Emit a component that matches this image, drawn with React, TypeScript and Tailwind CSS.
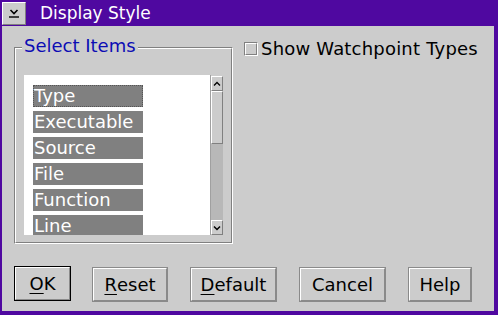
import React from "react";

const F = { fontFamily: '"DejaVu Sans", "Liberation Sans", sans-serif' };

function Btn({ label, u, w, def }: { label: string; u?: number; w: number; def?: boolean }) {
  const text =
    u === undefined ? (
      label
    ) : (
      <>
        {label.slice(0, u)}
        <span className="underline underline-offset-[3px]">{label[u]}</span>
        {label.slice(u + 1)}
      </>
    );
  return (
    <div
      className={`h-[35px] border ${def ? "border-black" : "border-[#8a8a8a]"} bg-[#cccccc]`}
      style={{ width: w }}
    >
      <div className="h-full w-full border border-t-white border-l-white border-b-[#8a8a8a] border-r-[#8a8a8a] flex items-center justify-center text-[18px] text-black">
        {text}
      </div>
    </div>
  );
}

const items = ["Type", "Executable", "Source", "File", "Function", "Line"];

export default function App() {
  return (
    <div
      className="w-[498px] h-[315px] bg-[#4f08a0] flex flex-col pl-[2px] pr-[4px] pb-[4px] overflow-hidden"
      style={F}
    >
      {/* title bar */}
      <div className="h-[26px] flex items-start shrink-0">
        <div className="mt-[2px] w-[24px] h-[23px] bg-[#cccccc] border border-t-white border-l-white border-b-[#808080] border-r-[#808080] flex items-center justify-center">
          <svg width="14" height="12" viewBox="0 0 14 12">
            <path d="M3.5 2 L7 5.5 L10.5 2" fill="none" stroke="black" strokeWidth="1.6" />
            <path d="M2 9 H12" stroke="black" strokeWidth="1.4" />
          </svg>
        </div>
        <div className="ml-[14px] text-white text-[17px] leading-[26px]">Display Style</div>
      </div>

      {/* body */}
      <div className="flex-1 bg-[#cccccc] flex flex-col">
        <div className="flex">
          {/* group box */}
          <div className="relative ml-[12px] mt-[21px] w-[219px] h-[197px] border border-t-[#808080] border-l-[#808080] border-b-white border-r-white">
            <div className="h-full w-full border border-t-white border-l-white border-b-[#808080] border-r-[#808080] pl-[8px] pt-[26px]">
              <div className="flex w-[199px] h-[160px]">
                <div className="w-[187px] h-full bg-white pl-[9px] pt-[10px] flex flex-col gap-[4px] overflow-hidden">
                  {items.map((it, i) => (
                    <div
                      key={it}
                      className={`shrink-0 w-[110px] h-[22px] bg-[#808080] text-white text-[18px] leading-[22px] pl-[1px] ${
                        i === 0 ? "outline outline-1 outline-dotted outline-[#555] -outline-offset-1" : ""
                      }`}
                    >
                      {it}
                    </div>
                  ))}
                </div>
                {/* scrollbar */}
                <div className="w-[13px] h-full bg-[#cccccc] border-l border-[#a0a0a0] flex flex-col">
                  <div className="h-[15px] mt-[1px] bg-[#cccccc] border border-t-white border-l-white border-b-[#808080] border-r-[#808080] flex items-center justify-center">
                    <svg width="8" height="6" viewBox="0 0 8 6">
                      <path d="M1 4.5 L4 1.5 L7 4.5" fill="none" stroke="black" strokeWidth="1.3" />
                    </svg>
                  </div>
                  <div className="h-[53px] bg-[#cccccc] border border-t-white border-l-white border-b-[#808080] border-r-[#808080]" />
                  <div className="flex-1 bg-[#b8b8b8]" />
                  <div className="h-[15px] bg-[#cccccc] border border-t-white border-l-white border-b-[#808080] border-r-[#808080] flex items-center justify-center">
                    <svg width="8" height="6" viewBox="0 0 8 6">
                      <path d="M1 1.5 L4 4.5 L7 1.5" fill="none" stroke="black" strokeWidth="1.5" />
                    </svg>
                  </div>
                </div>
              </div>
            </div>
            <div className="absolute left-[7px] top-[-12px] bg-[#cccccc] px-[2px] text-[#0c0cb4] text-[18px] leading-[20px]">
              Select Items
            </div>
          </div>

          {/* checkbox */}
          <div className="ml-[11px] mt-[13px] flex items-center h-[20px]">
            <div className="w-[14px] h-[14px] border border-t-[#808080] border-l-[#808080] border-b-white border-r-white">
              <div className="w-full h-full border border-t-white border-l-white border-b-[#808080] border-r-[#808080] bg-[#cccccc]" />
            </div>
            <span className="ml-[3px] text-black text-[18px] leading-[20px] tracking-[0.2px]">Show Watchpoint Types</span>
          </div>
        </div>

        {/* buttons */}
        <div className="flex items-start mt-[22px] ml-[12px]">
          <Btn label="OK" u={0} w={57} def />
          <div className="ml-[21px] mt-[1px]">
            <Btn label="Reset" u={0} w={76} />
          </div>
          <div className="ml-[22px] mt-[1px]">
            <Btn label="Default" u={0} w={87} />
          </div>
          <div className="ml-[22px] mt-[1px]">
            <Btn label="Cancel" w={87} />
          </div>
          <div className="ml-[22px] mt-[1px]">
            <Btn label="Help" w={64} />
          </div>
        </div>
      </div>
    </div>
  );
}
